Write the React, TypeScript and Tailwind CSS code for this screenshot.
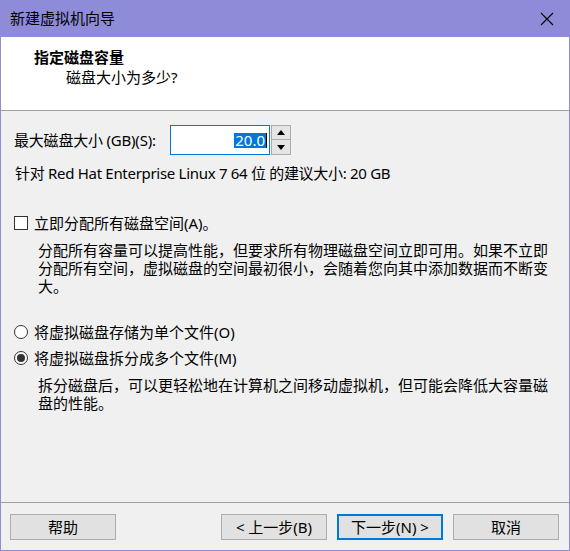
import React from 'react';

const font = {
  fontFamily: '"Noto Sans", "Noto Sans CJK SC", sans-serif',
};

const Radio = ({ checked, label }: { checked?: boolean; label: string }) => (
  <div className="flex items-center h-[20px]">
    <div className="shrink-0 w-[14px] h-[14px] rounded-full border border-[#333333] bg-white flex items-center justify-center">
      {checked && <div className="w-[8px] h-[8px] rounded-full bg-[#333333]" />}
    </div>
    <span className="ml-[6px]">{label}</span>
  </div>
);

const WizardButton = ({ label, focused }: { label: string; focused?: boolean }) => (
  <button
    className={`w-[106px] h-[26px] bg-[#e1e1e1] text-[15px] leading-none flex items-center justify-center ${
      focused ? 'border-2 border-[#0078d7]' : 'border border-[#adadad]'
    }`}
  >
    {label}
  </button>
);

const App = () => {
  return (
    <div
      className="w-[570px] h-[551px] flex flex-col bg-[#f0f0f0] border border-t-0 border-[#8e8cd8] text-[15px] text-black overflow-hidden"
      style={font}
    >
      {/* Title bar */}
      <div className="h-[37px] shrink-0 bg-[#8e8cd8] flex items-center justify-between pl-[9px] pr-[15px]">
        <span className="text-[15px]">新建虚拟机向导</span>
        <svg width="14" height="14" viewBox="0 0 14 14" className="mt-[1px]">
          <path d="M1 1 L13 13 M13 1 L1 13" stroke="#000" strokeWidth="1.1" />
        </svg>
      </div>

      {/* Header */}
      <div className="h-[74px] shrink-0 bg-white border-b border-[#a0a0a0] pt-[10px] pl-[33px] leading-[20px]">
        <div className="font-bold">指定磁盘容量</div>
        <div className="pl-[32px]">磁盘大小为多少?</div>
      </div>

      {/* Body */}
      <div className="flex-1 pt-[14px] pl-[13px] leading-[18px]">
        <div className="flex items-center h-[30px]">
          <span className="w-[156px] tracking-[-0.2px]">最大磁盘大小 (GB)(S):</span>
          <div className="w-[100px] h-[30px] border border-[#0078d7] bg-white flex items-center justify-end pr-[2px]">
            <span className="bg-[#0078d7] text-white leading-[15px] px-[1px]">20.0</span>
            <span className="w-[1px] h-[15px] bg-black" />
          </div>
          <div className="ml-[1px] w-[20px] h-[30px] flex flex-col">
            <div className="h-[15px] border border-[#acacac] bg-[#e5e5e5] flex items-center justify-center">
              <svg width="8" height="5" viewBox="0 0 8 5">
                <path d="M0 5 L4 0 L8 5 Z" fill="#000" />
              </svg>
            </div>
            <div className="h-[15px] border border-t-0 border-[#acacac] bg-[#e5e5e5] flex items-center justify-center">
              <svg width="8" height="5" viewBox="0 0 8 5">
                <path d="M0 0 L4 5 L8 0 Z" fill="#000" />
              </svg>
            </div>
          </div>
        </div>

        <div className="mt-[9px] pl-[1px] tracking-[-0.3px]">
          针对 Red Hat Enterprise Linux 7 64 位 的建议大小: 20 GB
        </div>

        <div className="mt-[31px] flex items-center h-[20px]">
          <div className="shrink-0 w-[14px] h-[14px] border border-[#333333] bg-white" />
          <span className="ml-[6px]">立即分配所有磁盘空间(A)。</span>
        </div>
        <div className="mt-[8px] pl-[24px] pr-[20px]">
          <div>分配所有容量可以提高性能，但要求所有物理磁盘空间立即可用。如果不立即</div>
          <div>分配所有空间，虚拟磁盘的空间最初很小，会随着您向其中添加数据而不断变</div>
          <div>大。</div>
        </div>

        <div className="mt-[27px]">
          <Radio label="将虚拟磁盘存储为单个文件(O)" />
        </div>
        <div className="mt-[6px]">
          <Radio checked label="将虚拟磁盘拆分成多个文件(M)" />
        </div>
        <div className="mt-[8px] pl-[24px]">
          <div>拆分磁盘后，可以更轻松地在计算机之间移动虚拟机，但可能会降低大容量磁</div>
          <div>盘的性能。</div>
        </div>
      </div>

      {/* Footer */}
      <div className="h-[48px] shrink-0 border-t border-[#a0a0a0] pt-[11px] pl-[9px] pr-[10px] flex items-start">
        <WizardButton label="帮助" />
        <div className="flex-1" />
        <div className="flex gap-[10px]">
          <WizardButton label="< 上一步(B)" />
          <WizardButton label="下一步(N) >" focused />
          <WizardButton label="取消" />
        </div>
      </div>
    </div>
  );
};

export default App;
